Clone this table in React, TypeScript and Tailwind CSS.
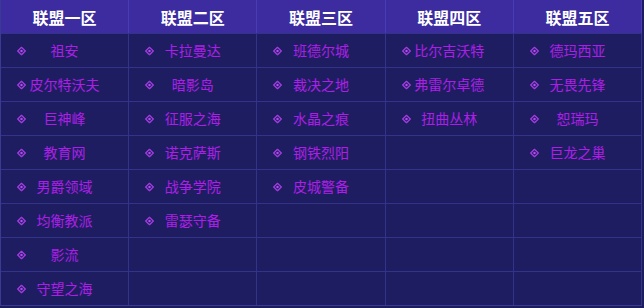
const columns: { title: string; items: string[] }[] = [
  { title: '联盟一区', items: ['祖安', '皮尔特沃夫', '巨神峰', '教育网', '男爵领域', '均衡教派', '影流', '守望之海'] },
  { title: '联盟二区', items: ['卡拉曼达', '暗影岛', '征服之海', '诺克萨斯', '战争学院', '雷瑟守备'] },
  { title: '联盟三区', items: ['班德尔城', '裁决之地', '水晶之痕', '钢铁烈阳', '皮城警备'] },
  { title: '联盟四区', items: ['比尔吉沃特', '弗雷尔卓德', '扭曲丛林'] },
  { title: '联盟五区', items: ['德玛西亚', '无畏先锋', '恕瑞玛', '巨龙之巢'] },
];

const ROWS = 8;

function Diamond() {
  return (
    <svg width="9" height="9" viewBox="0 0 10 10" className="absolute left-[16px] top-1/2 -translate-y-1/2">
      <path d="M5 0.8 L9.2 5 L5 9.2 L0.8 5 Z" fill="none" stroke="#a43ae0" strokeWidth="1.4" />
      <circle cx="5" cy="5" r="1.4" fill="#b04cf0" />
    </svg>
  );
}

export default function App() {
  return (
    <div className="w-[644px] h-[308px] bg-[#1d1c5c] font-['Noto_Sans_CJK_SC',sans-serif]">
      <div className="w-[642px] border-l border-b border-[#3a3994]">
        <div className="grid grid-cols-5 h-[33px] bg-[#3c2ca0]">
          {columns.map((c) => (
            <div
              key={c.title}
              className="flex items-center justify-center border-r border-[#4a3cb4] text-white font-bold text-[16px]"
            >
              {c.title}
            </div>
          ))}
        </div>
        {Array.from({ length: ROWS }).map((_, r) => (
          <div key={r} className="grid grid-cols-5 h-[34px] bg-[#1f1d62]">
            {columns.map((c) => {
              const item = c.items[r];
              return (
                <div
                  key={c.title}
                  className="relative flex items-center justify-center border-r border-t border-[#33338a] text-[14px] text-[#ad1fe6]"
                >
                  {item && (
                    <>
                      <Diamond />
                      <span>{item}</span>
                    </>
                  )}
                </div>
              );
            })}
          </div>
        ))}
      </div>
    </div>
  );
}
